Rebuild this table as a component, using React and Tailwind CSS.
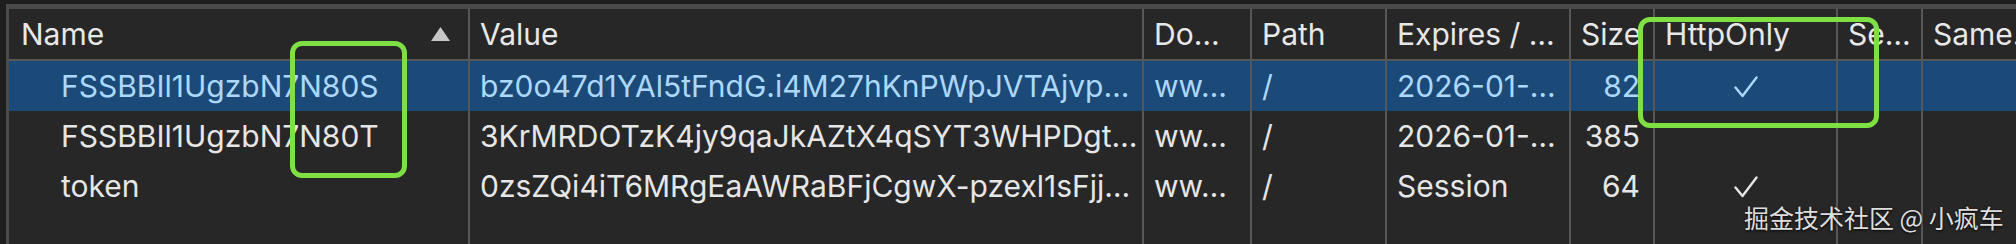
import React from "react";

const cols = [
  { key: "name", label: "Name", w: "w-[459px]" },
  { key: "value", label: "Value", w: "w-[674px]" },
  { key: "domain", label: "Do…", w: "w-[108px]" },
  { key: "path", label: "Path", w: "w-[135px]" },
  { key: "expires", label: "Expires / …", w: "w-[184px]" },
  { key: "size", label: "Size", w: "w-[84px]" },
  { key: "httpOnly", label: "HttpOnly", w: "w-[183px]" },
  { key: "secure", label: "Se…", w: "w-[85px]" },
  { key: "sameSite", label: "Same…", w: "w-[200px]" },
];

const cookies = [
  {
    name: "FSSBBIl1UgzbN7N80S",
    value: "bz0o47d1YAl5tFndG.i4M27hKnPWpJVTAjvp…",
    domain: "ww…",
    path: "/",
    expires: "2026-01-…",
    size: "82",
    httpOnly: true,
    selected: true,
  },
  {
    name: "FSSBBIl1UgzbN7N80T",
    value: "3KrMRDOTzK4jy9qaJkAZtX4qSYT3WHPDgt…",
    domain: "ww…",
    path: "/",
    expires: "2026-01-…",
    size: "385",
    httpOnly: false,
  },
  {
    name: "token",
    value: "0zsZQi4iT6MRgEaAWRaBFjCgwX-pzexl1sFjj…",
    domain: "ww…",
    path: "/",
    expires: "Session",
    size: "64",
    httpOnly: true,
  },
];

const Check = () => (
  <svg width="24" height="22" viewBox="0 0 24 22" fill="none">
    <path
      d="M1.5 11.5 L8.5 20 L22.5 1.5"
      stroke="currentColor"
      strokeWidth="2.4"
      strokeLinecap="round"
      strokeLinejoin="round"
    />
  </svg>
);

const SortUp = () => (
  <svg width="19" height="14" viewBox="0 0 19 14">
    <polygon points="9.5,0 19,14 0,14" fill="#c6c6c6" />
  </svg>
);

const renderCell = (col, row, i) => {
  const border = i === 0 ? "" : "border-l-2 border-[#575757]";
  if (col.key === "name") {
    return (
      <div key={col.key} className={`${col.w} shrink-0 flex items-center pl-[52px] ${border}`}>
        {row.name}
      </div>
    );
  }
  if (col.key === "size") {
    return (
      <div key={col.key} className={`${col.w} shrink-0 flex items-center justify-end pr-[13px] ${border}`}>
        {row.size}
      </div>
    );
  }
  if (col.key === "httpOnly") {
    return (
      <div key={col.key} className={`${col.w} shrink-0 flex items-center justify-center pt-[1px] ${border}`}>
        {row.httpOnly && <Check />}
      </div>
    );
  }
  if (col.key === "secure" || col.key === "sameSite") {
    return <div key={col.key} className={`${col.w} shrink-0 ${border}`} />;
  }
  return (
    <div key={col.key} className={`${col.w} shrink-0 flex items-center pl-[10px] whitespace-nowrap overflow-hidden ${border}`}>
      {row[col.key]}
    </div>
  );
};

export default function App() {
  return (
    <div
      className="relative w-[2016px] h-[244px] overflow-hidden bg-[#1e1e1e] pt-[4px] pl-[6px] text-[30px] text-[#e6e6e6]"
      style={{ fontFamily: "Inter, 'Liberation Sans', sans-serif" }}
    >
      <div className="h-full border-t-[5px] border-l-[3px] border-[#4b4b4b] bg-[#272727] flex flex-col">
        {/* header */}
        <div className="flex h-[52px] shrink-0 border-b-2 border-[#575757] text-[#e8e8e8]">
          {cols.map((col, i) => (
            <div
              key={col.key}
              className={`${col.w} shrink-0 flex items-center justify-between whitespace-nowrap ${
                i === 0 ? "pl-[12px] pr-[18px]" : "pl-[10px] border-l-2 border-[#575757]"
              }`}
            >
              <span>{col.label}</span>
              {i === 0 && <SortUp />}
            </div>
          ))}
        </div>

        {/* rows */}
        {cookies.map((row) => (
          <div
            key={row.name}
            className={`flex h-[50px] shrink-0 ${
              row.selected ? "bg-[#1c4a78] text-[#acd8fd]" : ""
            }`}
          >
            {cols.map((col, i) => renderCell(col, row, i))}
          </div>
        ))}

        {/* filler keeps the column lines running */}
        <div className="flex flex-1">
          {cols.map((col, i) => (
            <div key={col.key} className={`${col.w} shrink-0 ${i === 0 ? "" : "border-l-2 border-[#575757]"}`} />
          ))}
        </div>
      </div>

      {/* annotation boxes */}
      <div className="absolute left-[290px] top-[41px] w-[117px] h-[137px] border-[5px] border-[#7ee043] rounded-[12px]" />
      <div className="absolute left-[1638px] top-[17px] w-[241px] h-[111px] border-[5px] border-[#7ee043] rounded-[12px]" />

      {/* watermark */}
      <div
        className="absolute left-[1744px] top-[201px] text-[25px] leading-[32px] text-[#dedede] whitespace-nowrap [text-shadow:0_1px_3px_rgba(0,0,0,0.9)]"
        style={{ fontFamily: "'Noto Sans CJK SC', sans-serif" }}
      >
        掘金技术社区 @ 小疯车
      </div>
    </div>
  );
}
